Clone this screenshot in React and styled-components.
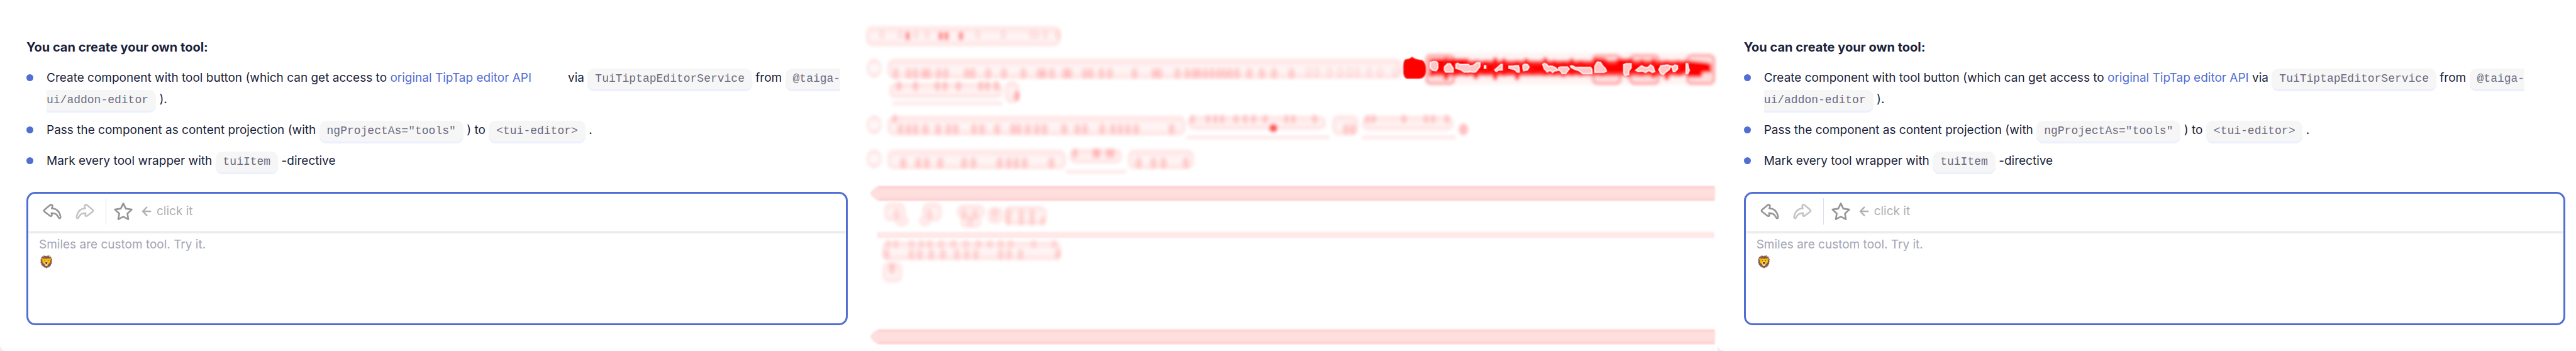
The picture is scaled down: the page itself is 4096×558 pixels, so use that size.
import React from 'react';
import styled, { createGlobalStyle } from 'styled-components';

const GlobalStyle = createGlobalStyle`
  * { box-sizing: border-box; }
  body { margin: 0; background: #fff; }
`;

const Page = styled.main`
  display: grid;
  grid-template-columns: repeat(3, minmax(0, 1fr));
  min-height: 100vh;
  font-family: Inter, "Liberation Sans", sans-serif;
  font-size: 19px;
  line-height: 34px;
  color: #1b1f3b;
`;

const Cell = styled.section`
  display: grid;
  background: #ececec;
`;

const Card = styled.article`
  margin-bottom: ${(p) => (p.$edge ? '1px' : '0')};
  padding: 58px 17px 41px 42px;
  background: #fff;
  border-bottom-left-radius: 11px;
`;

const Title = styled.h2`
  margin: 0 0 15px;
  font-size: 20px;
  font-weight: 700;
  line-height: 34px;
`;

const List = styled.ul`
  display: flex;
  flex-direction: column;
  gap: 15px;
  margin: 0 0 32px;
  padding: 0;
  list-style: none;
`;

const Item = styled.li`
  display: grid;
  grid-template-columns: 11px 1fr;
  column-gap: 21px;

  &::before {
    content: '';
    height: 11px;
    margin-top: 11px;
    border-radius: 50%;
    background: #526ed3;
  }
`;

const Code = styled.code`
  padding: 6px 12px 7px;
  border-radius: 11px;
  background: #f6f6f6;
  box-shadow: 0 3px #ebefff;
  color: #6c6b80;
  font-family: "Liberation Mono", monospace;
  font-size: 18px;
  line-height: 18px;
`;

const Link = styled.a`
  margin-right: ${(p) => (p.$spaced ? '58px' : '0')};
  color: #526ed3;
  text-decoration: none;
`;

const Editor = styled.div`
  height: 212px;
  overflow: hidden;
  border: 3px solid #526ed3;
  border-radius: 14px;
`;

const Toolbar = styled.div`
  display: flex;
  align-items: center;
  height: 60px;
  padding: 7px 17px 11px;
  box-shadow: 0 1px 4px rgba(0, 0, 0, 0.2);
`;

const Tool = styled.button`
  display: grid;
  place-items: center;
  width: 42px;
  height: 42px;
  margin-right: ${(p) => (p.$gap || 0)}px;
  padding: 0;
  border: 0;
  background: none;
  color: #959595;

  &:disabled { color: #c4c4c4; }
`;

const Divider = styled.span`
  width: 1px;
  height: 42px;
  margin: 0 6px 0 12px;
  background: #dadef4;
`;

const Hint = styled.span`
  display: flex;
  align-items: center;
  gap: 8px;
  margin-left: 8px;
  color: #b0b0b0;
`;

const Content = styled.div`
  padding: 7px 17px;
  line-height: 28px;
  outline: none;

  p { margin: 0; }
`;

const Placeholder = styled.p`
  color: #a4a5b5;
`;

const DiffCell = styled.section`
  overflow: hidden;

  svg { display: block; width: 100%; }
`;

const Arrow = ({ flip }) => (
  <svg width="30" height="25" viewBox="0 0 134 114" fill="none" stroke="currentColor" strokeWidth="12" strokeLinejoin="round" aria-hidden="true">
    <path
      transform={flip ? 'translate(134 0) scale(-1 1)' : undefined}
      d="M50 10 L11 43 Q4 50 11 57 L50 87 Q62 94 64 84 L62 68 Q98 66 111 96 Q116 107 122 105 Q130 102 126 88 C118 52 98 34 64 33 Q70 22 68 12 Q62 2 50 10 Z"
    />
  </svg>
);

const Star = () => (
  <svg width="30" height="30" viewBox="0 0 136 132" fill="none" stroke="currentColor" strokeWidth="12" strokeLinejoin="round" aria-hidden="true">
    <path d="M68 9 L86 46 L129 53 L98 82 L104 123 L68 104 L32 123 L39 82 L8 53 L50 46 Z" />
  </svg>
);

const Back = () => (
  <svg width="16" height="16" viewBox="0 0 70 72" fill="none" stroke="currentColor" strokeWidth="11" strokeLinecap="round" strokeLinejoin="round" aria-hidden="true">
    <path d="M63 36 H8 M36 7 L8 36 L36 65" />
  </svg>
);

const Example = ({ edge, spaced }) => (
  <Cell>
    <Card $edge={edge}>
      <Title>You can create your own tool:</Title>
      <List>
        <Item>
          <div>
            Create component with tool button (which can get access to{' '}
            <Link href="#tiptap" $spaced={spaced}>original TipTap editor API</Link>{spaced ? '' : ' '}
            via <Code>TuiTiptapEditorService</Code> from <Code>@taiga-ui/addon-editor</Code> ).
          </div>
        </Item>
        <Item>
          <div>
            Pass the component as content projection (with <Code>ngProjectAs="tools"</Code> ) to{' '}
            <Code>&lt;tui-editor&gt;</Code> .
          </div>
        </Item>
        <Item>
          <div>
            Mark every tool wrapper with <Code>tuiItem</Code> -directive
          </div>
        </Item>
      </List>
      <Editor>
        <Toolbar role="toolbar" aria-label="Editor tools">
          <Tool type="button" aria-label="Undo" $gap={10}><Arrow /></Tool>
          <Tool type="button" aria-label="Redo" disabled><Arrow flip /></Tool>
          <Divider />
          <Tool type="button" aria-label="Insert smile"><Star /></Tool>
          <Hint><Back />click it</Hint>
        </Toolbar>
        <Content role="textbox" aria-label="Editor content" contentEditable suppressContentEditableWarning spellCheck={false}>
          <Placeholder>Smiles are custom tool. Try it.</Placeholder>
          <p>🦁</p>
        </Content>
      </Editor>
    </Card>
  </Cell>
);

// Soft areas of the difference map: [x, y, width, height]
const areas = [
  [18, 63, 472, 49],
  [70, 142, 1246, 49], [74, 200, 276, 38], [354, 196, 36, 54],
  [70, 280, 722, 48], [796, 280, 336, 34], [1146, 278, 64, 50], [1218, 280, 222, 36],
  [70, 362, 432, 48], [510, 360, 128, 36], [652, 362, 160, 48],
  [62, 490, 52, 46], [88, 520, 34, 28], [154, 490, 48, 46], [146, 520, 30, 28],
  [238, 494, 68, 36], [246, 520, 52, 32], [312, 500, 38, 42], [352, 498, 104, 46],
  [57, 584, 434, 46], [58, 634, 48, 50],
];

const underlines = [[82, 246, 266], [794, 328, 346], [1218, 328, 228], [502, 411, 146]];

// Denser points inside the text rows: row centre, radius, strength and x positions
const spots = [
  { y: 87, r: 6, o: 0.45, xs: [119, 199, 213, 248] },
  { y: 84, r: 6, o: 0.1, xs: [57, 102, 139, 166, 289, 350, 420, 432, 452, 482] },
  { y: 177, r: 8, o: 0.17, xs: [90, 122, 138, 158, 169, 194, 211, 262, 276, 314, 352, 399, 438, 449, 468, 500, 510, 548, 562, 588, 608, 668, 716, 728, 772, 796, 812, 824, 840, 856, 872, 886, 900, 916, 946, 976, 1006, 1048] },
  { y: 174, r: 8, o: 0.08, xs: [1090, 1108, 1140, 1166, 1188, 1206, 1236, 1262, 1300] },
  { y: 208, r: 7, o: 0.2, xs: [98, 138, 191, 209, 242, 296, 312, 334] },
  { y: 312, r: 8, o: 0.18, xs: [102, 121, 138, 162, 193, 218, 235, 280, 299, 336, 374, 388, 410, 432, 450, 498, 530, 548, 590, 616, 634, 652, 672, 758, 1180, 1196] },
  { y: 288, r: 6, o: 0.18, xs: [88, 808, 846, 864, 880, 914, 936, 956, 984, 1036, 1052, 1104, 1232, 1246, 1320, 1374, 1390, 1424] },
  { y: 394, r: 8, o: 0.18, xs: [108, 145, 165, 198, 256, 278, 342, 364, 382, 402, 467, 678, 714, 738, 792] },
  { y: 371, r: 7, o: 0.2, xs: [524, 572, 580, 604, 614] },
  { y: 518, r: 7, o: 0.14, xs: [92, 172, 256, 282, 330, 364, 394, 420] },
  { y: 590, r: 6, o: 0.13, xs: [72, 90, 128, 152, 172, 200, 230, 260, 290, 318, 344, 368, 424, 474] },
  { y: 615, r: 7, o: 0.16, xs: [68, 128, 148, 176, 204, 238, 262, 284, 344, 364, 392, 482] },
  { y: 535, r: 6, o: 0.14, xs: [270, 362, 394, 420, 446] },
  { y: 650, r: 8, o: 0.2, xs: [81] },
];

const strokes = [
  'M1400 150 L1386 180', 'M1422 144 V188', 'M1446 148 V180', 'M1472 146 V180', 'M1494 150 V186',
  'M1518 150 V176', 'M1541 144 V188', 'M1562 146 V180', 'M1594 150 V188', 'M1616 146 L1632 176',
  'M1662 144 V180', 'M1684 150 V180', 'M1706 152 V182', 'M1726 146 V180', 'M1748 150 V180',
  'M1800 146 V180', 'M1862 146 V182', 'M1896 148 V180', 'M1924 146 V184', 'M1956 150 V188', 'M1984 150 V180',
];

const holes = [
  'M1384 152 l6 -3 h8 l4 4 v12 l-4 6 -8 -1 -6 -6z',
  'M1418 162 l8 -8 6 0 7 11 v9 h-18 l-3 -5z',
  'M1446 155 l4 -2 6 3 h20 l4 4 8 -2 8 -6 h8 v9 l-6 8 -5 5 h-9 l-6 -2 v2 h-12 l-8 -5 -12 -4z',
  'M1515 159 h3 v6 h-3z',
  'M1540 169 l10 -9 5 -4 h3 v13 h-8 l-7 4z',
  'M1574 160 h9 l8 -1 h6 l2 6 v9 h-5 l-5 -5 -6 -2 -9 -2z',
  'M1608 158 l5 -3 6 1 4 6 -4 7 -9 2 -2 -6z',
  'M1656 156 l4 -3 6 3 2 4 h6 l5 0 8 4 6 6 -4 1 -4 0 -5 4 -4 -4 h-6 l-3 3 -7 -7z',
  'M1694 164 l4 -2 h18 l4 5 -5 6 -4 5 h-8 l-3 -5 -5 -4z',
  'M1723 160 l4 -1 8 4 h28 l9 0 3 5 v10 h-22 l-9 -7 -12 -4 -7 -4z',
  'M1782 172 v-12 l6 -10 8 1 4 7 8 8 2 6 -6 3 h-22z',
  'M1852 156 l6 -2 h12 v10 l-6 8 v8 l-9 2 -3 -6z',
  'M1881 170 l10 -8 4 -3 8 4 8 0 6 -6 6 4 4 12 -6 2 -8 -5 -8 5 -8 -3 -10 1z',
  'M1937 168 l5 -9 16 -2 8 3 -4 8 -8 6 -6 6 -6 -2z',
  'M1968 160 h4 l4 -3 6 2 v8 l-6 6 h-4z',
  'M2003 154 h4 l2 12 2 4 -4 8 h-4z',
];

const Difference = () => (
  <DiffCell>
    <svg viewBox="0 0 2078 850" role="img" aria-label="Difference between the two examples">
      <defs>
        <filter id="soft" x="-20%" y="-60%" width="140%" height="220%"><feGaussianBlur stdDeviation="4" /></filter>
        <filter id="bar" filterUnits="userSpaceOnUse" x="0" y="400" width="2078" height="450"><feGaussianBlur stdDeviation="2" /></filter>
      </defs>
      <rect width="2078" height="850" fill="#fff" />
      <g filter="url(#soft)">
        {areas.map(([x, y, w, h]) => (
          <g key={`${x}-${y}`}>
            <rect x={x} y={y} width={w} height={h} rx="16" fill="#ffe8e8" />
            <rect x={x + 9} y={y + 14} width={w - 18} height={h - 26} rx="8" fill="#fffafa" opacity="0.6" />
          </g>
        ))}
        {underlines.map(([x, y, w]) => <rect key={`${x}-${y}`} x={x} y={y} width={w} height="9" fill="#ffe9e9" />)}
        {[165, 302, 384].map((y) => (
          <g key={y}>
            <ellipse cx="38" cy={y} rx="18" ry="23" fill="#ffe6e6" />
            <ellipse cx="38" cy={y} rx="13" ry="12" fill="#fff8f8" />
          </g>
        ))}
      </g>
      <g filter="url(#soft)" fill="#ff3030">
        {spots.map(({ y, r, o, xs }) => xs.map((x) => (
          <ellipse key={`${x}-${y}`} cx={x} cy={y} rx={r} ry={r + 5} opacity={o} />
        )))}
        <ellipse cx="383" cy="232" rx="7" ry="12" opacity="0.3" />
        <ellipse cx="1004" cy="310" rx="9" ry="9" opacity="0.8" />
        <ellipse cx="1464" cy="313" rx="11" ry="14" opacity="0.3" />
      </g>
      <g filter="url(#bar)">
        {[450, 797].map((y) => (
          <g key={y}>
            <path d={`M48 ${y} H2073 V${y + 36} H48 Q36 ${y + 32} 28 ${y + 18} Q36 ${y + 4} 48 ${y} Z`} fill="#ffdede" />
            <path d={`M48 ${y + 3} H2070 M48 ${y + 33} H2070`} stroke="#ffcfcf" strokeWidth="5" />
          </g>
        ))}
        <rect x="45" y="561" width="2026" height="15" fill="#ffe8e8" />
      </g>
      <g filter="url(#soft)">
        <rect x="1374" y="128" width="690" height="76" fill="#fff3f3" />
        {[[1375, 66], [1778, 66], [1868, 68], [2006, 64]].map(([x, w]) => (
          <rect key={x} x={x} y="134" width={w} height="68" rx="10" fill="#ffdede" stroke="#ff9c9c" strokeWidth="6" />
        ))}
        <rect x="1384" y="146" width="618" height="38" rx="8" fill="#ff3c3c" />
        <path d="M1382 165 H2064" stroke="#f00" strokeWidth="22" />
        <path d="M1388 148 H1470 M1784 146 L1806 148 M1840 148 H1870 M2000 152 L2054 158 M2010 180 H2036" stroke="#f00" strokeWidth="14" strokeLinecap="round" />
        {strokes.map((d) => <path key={d} d={d} stroke="#ff1010" strokeWidth="11" strokeLinecap="round" />)}
      </g>
      <path d="M1324 144 Q1332 144 1340 138 Q1346 144 1364 146 Q1374 152 1373 172 Q1372 188 1358 190 H1328 Q1318 188 1319 168 Q1318 148 1324 144 Z" fill="#f00" stroke="#ff5050" strokeWidth="2" />
      {holes.map((d) => <path key={d} d={d} fill="#ffc4c4" stroke="#fff5f5" strokeWidth="3" />)}
    </svg>
  </DiffCell>
);

export default function App() {
  return (
    <>
      <GlobalStyle />
      <Page>
        <Example spaced />
        <Difference />
        <Example edge />
      </Page>
    </>
  );
}
